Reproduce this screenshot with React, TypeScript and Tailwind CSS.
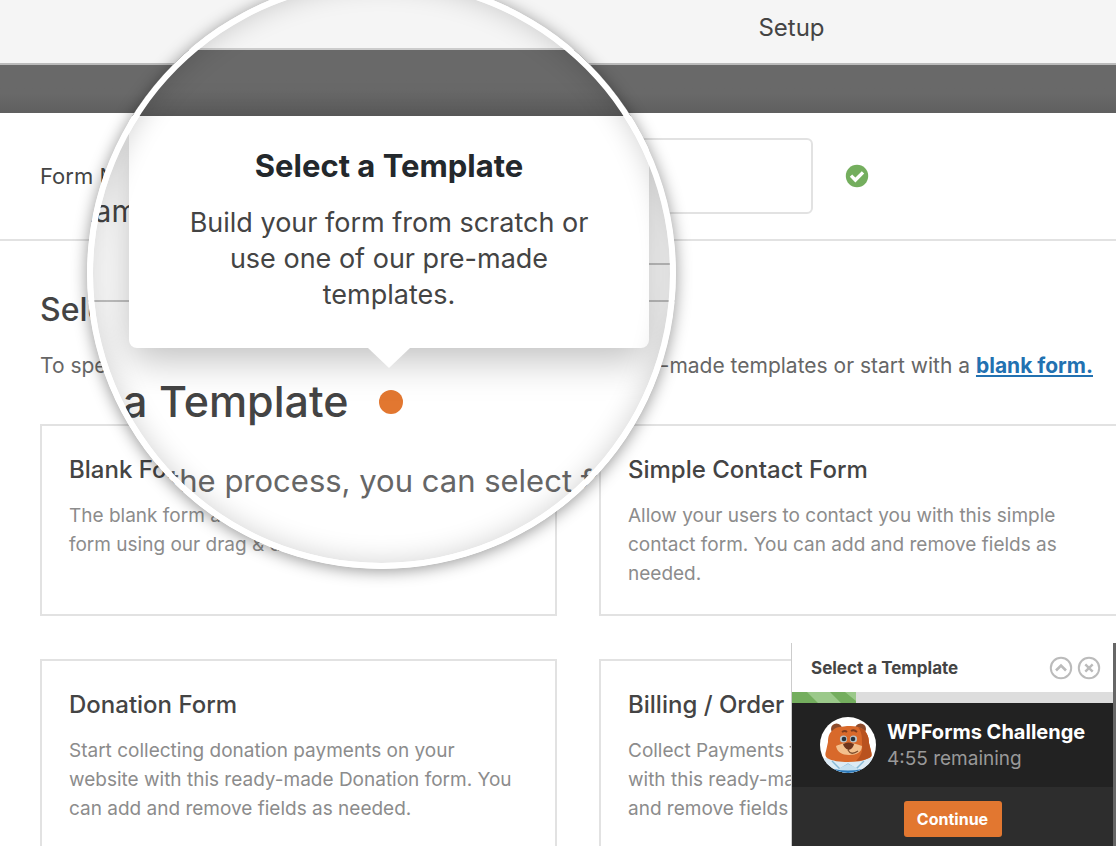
import type { ReactNode } from "react";

interface Template {
  readonly title: string;
  readonly lines: readonly string[];
}

const TEMPLATES: readonly Template[] = [
  {
    title: "Blank Form",
    lines: ["The blank form allows you to create any type of", "form using our drag & drop builder."],
  },
  {
    title: "Simple Contact Form",
    lines: ["Allow your users to contact you with this simple", "contact form. You can add and remove fields as", "needed."],
  },
  {
    title: "Donation Form",
    lines: ["Start collecting donation payments on your", "website with this ready-made Donation form. You", "can add and remove fields as needed."],
  },
  {
    title: "Billing / Order Form",
    lines: ["Collect Payments for product and service orders", "with this ready-made form template. You can add", "and remove fields as needed."],
  },
];

function TemplateCard({ title, lines }: Template) {
  return (
    <article className="h-48 border-2 border-[#e2e2e2] px-[27px] pt-7 even:border-r-0">
      <h3 className="text-[24px] leading-8 font-medium whitespace-nowrap text-[#444]">{title}</h3>
      <p className="mt-[15px] text-[19px] leading-[29px] whitespace-nowrap text-[#8c8c8c]">
        {lines.map((line) => (
          <span key={line} className="block">
            {line}
          </span>
        ))}
      </p>
    </article>
  );
}

function CheckBadge() {
  return (
    <svg viewBox="0 0 24 24" className="size-6" role="img" aria-label="Valid">
      <circle cx="12" cy="12" r="11.2" fill="#74ae5e" />
      <path d="M6 11.600l4.400 4.400 7.600-7.600" fill="none" stroke="#fff" strokeWidth="3.400" />
    </svg>
  );
}

// Magnified part of the page with the tooltip of the current step
function Lens() {
  return (
    <section
      aria-label="Current step"
      className="absolute -top-[22px] left-[87px] h-[591px] w-[589px] overflow-hidden rounded-[50%] bg-white shadow-[0_2px_16px_rgba(0,0,0,0.42)]"
    >
      <div className="-ml-[108px] w-[900px] whitespace-nowrap">
        <div className="h-[72px] border-b-2 border-[#ccc] bg-[#f5f5f5]" />
        <div className="h-[66px] bg-linear-to-b from-[#696969] from-60% to-[#5f5f5f]" />
        <div className="flex h-[186px] items-start border-b-2 border-[#c4c4c4] pt-[75px] pl-3">
          <p className="text-[30px] leading-10 text-[#444]">Form Name</p>
        </div>
        <p className="mt-[69px] pl-1 text-[43px] leading-[60px] font-medium text-[#444]">Select a Template</p>
        <p className="mt-[30px] text-[31px] leading-10 text-[#666]">
          To speed up the process, you can select from one
        </p>
      </div>

      <span className="absolute top-[285px] right-1 h-0.5 w-8 bg-[#c4c4c4]" />
      <span className="absolute top-[412px] left-[292px] size-6 rounded-full bg-[#e27730]" />

      <div
        role="tooltip"
        className="absolute top-[138px] left-[42px] w-[520px] rounded-b-lg bg-white px-12 pt-[31px] pb-[35px] text-center shadow-[0_10px_40px_rgba(0,0,0,0.27)]"
      >
        <h2 className="text-[31px] leading-[38px] font-bold text-[#23282c]">Select a Template</h2>
        <p className="mt-5 text-[27px] leading-9 text-[#444]">
          Build your form from scratch or
          <br />
          use one of our pre-made
          <br />
          templates.
        </p>
        <svg viewBox="0 0 42 20" className="absolute top-full left-[239px] h-5 w-[42px]" aria-hidden>
          <path d="M0 0h42L21 20z" fill="#fff" />
        </svg>
      </div>

      <div className="absolute inset-0 rounded-[50%] border-[6px] border-white shadow-[inset_0_0_28px_rgba(0,0,0,0.18)]" />
    </section>
  );
}

function BearAvatar() {
  return (
    <svg viewBox="0 0 56 56" className="size-14 shrink-0" role="img" aria-label="Sullie the bear">
      <defs>
        <clipPath id="avatar-clip">
          <circle cx="28" cy="28" r="28" />
        </clipPath>
      </defs>
      <g clipPath="url(#avatar-clip)">
        <rect width="56" height="56" fill="#fff" />
        <path d="M3 42c8-4 42-4 50 0v14H3z" fill="#dcebf5" />
        <path d="M12 44l8 8 8-5 8 5 8-8" fill="none" stroke="#87b9d6" strokeWidth="1.4" />
        <path d="M20 51l8-4 9 4 3 5H16z" fill="#c5e0f0" />
        <path d="M14 52q14 3 28 0v4H14z" fill="#2c79b9" />
        <circle cx="16.500" cy="12" r="5.500" fill="#8d4b2c" />
        <circle cx="40.500" cy="12" r="5.500" fill="#8d4b2c" />
        <path
          d="M13 13c4-4 10-3 14-4 5 0 9 0 14 2 6 3 8 9 8 15l2 8c1 4 1 6-2 7-6 3-13 4-21 4S12 44 7 41c-2-2-2-4-1-7l2-9c0-5 1-9 5-12z"
          fill="#d8692b"
        />
        <path d="M38 10c8 2 11 9 11 16l2 8c1 4 1 6-2 7-4 2-9 3-13 3 5-5 7-10 6-17 0-7 0-12-4-17z" fill="#b9521f" />
        <path d="M16 29c5-2 7-3 12-3s9 1 14 3c0 6-5 9-13 9-7 0-12-3-13-9z" fill="#f3c08d" />
        <path d="M22 15q3-2 5 0M31 14q3-2 6 1" fill="none" stroke="#7c3c1e" strokeWidth="1.8" />
        <circle cx="23.500" cy="22" r="3.600" fill="#b9c4c9" />
        <circle cx="33.500" cy="22" r="3.600" fill="#b9c4c9" />
        <circle cx="24" cy="22" r="2.300" fill="#26323d" />
        <circle cx="33" cy="22" r="2.300" fill="#26323d" />
        <path d="M23 27q5.500-3 11 0-1 5-5.500 6Q24 31 23 27z" fill="#6d341c" />
        <path d="M28 33q3 6 10 1" fill="none" stroke="#80502f" strokeWidth="1.300" />
      </g>
    </svg>
  );
}

function RoundButton({ label, children }: { readonly label: string; readonly children: ReactNode }) {
  return (
    <button type="button" aria-label={label} className="size-6 text-[#bbb]">
      <svg viewBox="0 0 24 24" fill="none" stroke="currentColor" strokeWidth="2" aria-hidden>
        <circle cx="12" cy="12" r="10.200" />
        {children}
      </svg>
    </button>
  );
}

function ChallengeWidget() {
  return (
    <aside className="absolute top-[643px] right-0 w-[325px] border-r-[3px] border-l border-r-[#666] border-l-[#ccc] bg-[#2d2d2d]">
      <header className="flex h-[49px] items-center gap-1 bg-white pr-3 pl-[19px]">
        <h2 className="flex-1 text-[17px] leading-6 font-bold whitespace-nowrap text-[#444]">Select a Template</h2>
        <RoundButton label="Collapse">
          <path d="M7 14.500l5-5 5 5" strokeWidth="2.600" />
        </RoundButton>
        <RoundButton label="Cancel">
          <path d="M8.300 8.300l7.400 7.400M15.700 8.300l-7.400 7.400" strokeWidth="2.400" />
        </RoundButton>
      </header>
      <div className="h-[11px] bg-[#ddd]">
        <svg className="h-[11px] w-16" viewBox="0 0 64 11" preserveAspectRatio="none" aria-hidden>
          <rect width="64" height="11" fill="#9bc98a" />
          <path d="M0 0h15l11 11H0zM38 0h15l11 9v2H49z" fill="#74ae5e" />
        </svg>
      </div>
      <div className="flex h-[84px] items-center gap-[11px] bg-[#222] pl-7 whitespace-nowrap">
        <BearAvatar />
        <div>
          <h3 className="text-[20px] leading-7 font-bold text-white">WPForms Challenge</h3>
          <p className="text-[19px] leading-[26px] text-[#999]">4:55 remaining</p>
        </div>
      </div>
      <footer className="flex h-[63px] justify-center pt-3.5">
        <button type="button" className="h-9 w-[98px] rounded-[3px] bg-[#e27730] text-[16px] font-bold text-white">
          Continue
        </button>
      </footer>
    </aside>
  );
}

export default function App() {
  return (
    <div className="relative h-screen overflow-hidden bg-white font-['Inter',sans-serif]">
      <header className="flex h-[65px] justify-center border-b-2 border-[#bbb] bg-[#f5f5f5] pt-3 pl-[467px]">
        <p className="text-[24px] leading-8 text-[#444]">Setup</p>
      </header>
      <div className="h-12 bg-linear-to-b from-[#696969] from-60% to-[#5f5f5f]" />

      <form className="flex h-32 items-center border-b-2 border-[#e2e2e2] pl-10">
        <label htmlFor="form-name" className="w-[210px] text-[22px] text-[#444]">
          Form Name
        </label>
        <input
          id="form-name"
          type="text"
          className="h-[76px] w-[563px] rounded-md border-2 border-[#e2e2e2] px-5 text-[22px] outline-none"
        />
        <span className="ml-8">
          <CheckBadge />
        </span>
      </form>

      <main className="pl-10">
        <h1 className="mt-[49px] text-[32px] leading-10 font-medium text-[#444]">Select a Template</h1>
        <p className="mt-5 flex justify-between pr-[23px] text-[21px] leading-8 whitespace-nowrap text-[#666]">
          <span>To speed up the process, you can select</span>
          <span>
            from one of our pre-made templates or start with a{" "}
            <a href="#blank" className="font-bold text-[#2271b1] underline">
              blank form.
            </a>
          </span>
        </p>
        <div className="mt-[42px] grid grid-cols-2 gap-x-[42px] gap-y-[43px]">
          {TEMPLATES.map((template) => (
            <TemplateCard key={template.title} {...template} />
          ))}
        </div>
      </main>

      <Lens />
      <ChallengeWidget />
    </div>
  );
}
